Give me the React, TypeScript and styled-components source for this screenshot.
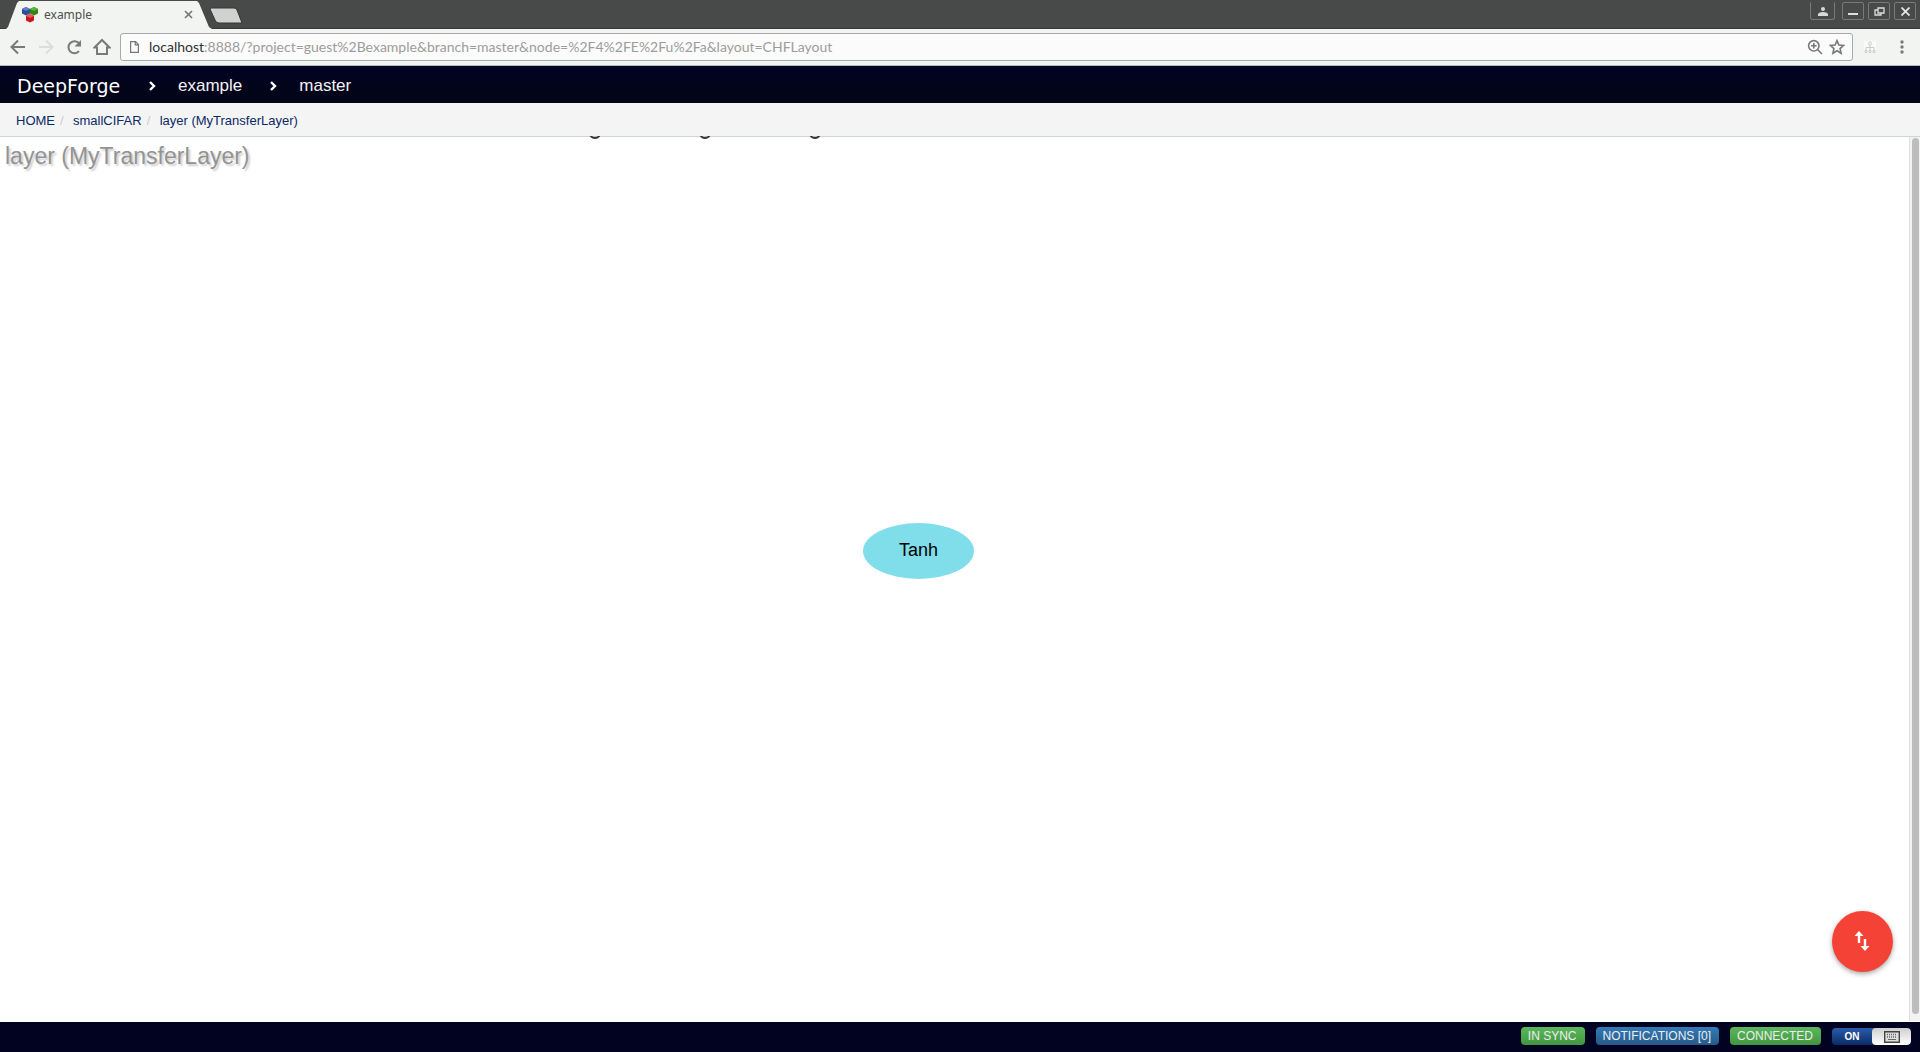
import React from 'react';
import styled, { createGlobalStyle } from 'styled-components';

const Global = createGlobalStyle`
  * { box-sizing: border-box; }
  html, body { margin: 0; padding: 0; overflow: hidden; }
  body { font-family: "Liberation Sans", Arial, sans-serif; background: #fff; }
  button, input { font: inherit; margin: 0; padding: 0; border: 0; background: none; }
  a { color: inherit; text-decoration: none; }
  svg { display: block; flex: none; }
`;

const uiFont = '"Noto Sans", "Open Sans", sans-serif';

const Page = styled.div`
  display: flex;
  flex-direction: column;
  height: 100vh;
`;

/* ---- browser chrome ---- */
const TabStrip = styled.div`
  display: flex;
  align-items: flex-start;
  height: 29px;
  background: #474a48;
  border-bottom: 1px solid #383a39;
`;
const Tab = styled.div`
  display: flex;
  align-items: center;
  width: 206px;
  height: 29px;
  margin-left: 6px;
  padding: 0 19px 0 16px;
  gap: 6px;
  background: #f2f4f2;
  clip-path: polygon(0 100%, 2px 93%, 11px 3px, 13px 1px, 191px 1px, 193px 3px, 203px 93%, 100% 100%);
`;
const TabTitle = styled.span`
  flex: 1;
  font: 12px/18px ${uiFont};
  color: #4c504e;
`;
const IconButton = styled.button`
  display: flex;
  align-items: center;
  justify-content: center;
  flex: none;
`;
const NewTab = styled(IconButton)`
  margin-top: 7px;
  margin-left: -3px;
`;
const WindowButtons = styled.div`
  display: flex;
  gap: 4px;
  margin: 2px 4px 0 auto;
`;
const WindowButton = styled(IconButton)<{ $user?: boolean }>`
  width: ${p => (p.$user ? 25 : 22)}px;
  height: 18px;
  margin-right: ${p => (p.$user ? 3 : 0)}px;
  border: 1px solid #777a78;
  border-top-color: ${p => (p.$user ? '#474a48' : '#777a78')};
  border-radius: ${p => (p.$user ? '0 0 3px 3px' : '2px')};
`;
const Toolbar = styled.div`
  display: flex;
  align-items: center;
  height: 37px;
  padding: 0 9px;
  background: #f2f4f2;
  border-bottom: 1px solid #b4b9b5;
`;
const NavButtons = styled.div`
  display: flex;
  gap: 10px;
  width: 111px;
`;
const AddressBar = styled.div`
  display: flex;
  align-items: center;
  flex: 1;
  height: 28px;
  padding: 0 7px 0 9px;
  border: 1px solid #a8aaa9;
  border-radius: 3px;
  background: #fbfbfb;
`;
const Address = styled.div`
  flex: 1;
  margin-left: 10px;
  font: 14px/20px Lato, ${uiFont};
  color: #9b9d9c;
  white-space: nowrap;
  b { font-weight: 400; color: #303231; }
`;
const AddressIcons = styled.div`
  display: flex;
  gap: 6px;
`;
const ToolbarEnd = styled.div`
  display: flex;
  align-items: center;
  gap: 17px;
  margin-left: 11px;
`;

/* ---- application ---- */
const AppHeader = styled.header`
  display: flex;
  align-items: center;
  height: 37px;
  padding: 2px 17px 0;
  background: linear-gradient(#020222, #020516);
  color: #f2f2f4;
  font-size: 17px;
  line-height: 20px;
`;
const Brand = styled.a`
  width: 104px;
  font: 19px/20px "DejaVu Sans", sans-serif;
  color: #fff;
`;
const Separator = styled.svg`
  margin: 0 22px 0 28px;
`;
const Crumbs = styled.nav`
  display: flex;
  align-items: center;
  height: 34px;
  padding: 2px 16px 0;
  background: #f4f4f4;
  border-bottom: 1px solid #cdd4e0;
  font-size: 13px;
  line-height: 18px;
  color: #0b2a66;
`;
const Slash = styled.span`
  width: 18px;
  padding-left: 5px;
  color: #ccc;
`;
const Workspace = styled.main`
  position: relative;
  flex: 1;
  min-height: 0;
  display: flex;
`;
const Canvas = styled.section`
  position: relative;
  flex: 1;
  padding: 5px;
`;
const Title = styled.h1`
  margin: 0;
  font-size: 23px;
  line-height: 28px;
  font-weight: 400;
  color: #939393;
  text-shadow: 2px 2px 2px #ccc;
`;
const EdgeMarks = styled.div`
  position: absolute;
  top: -1px;
  left: 590px;
  display: flex;
  gap: 100px;
`;
const Node = styled.button`
  position: absolute;
  left: 863px;
  top: 386px;
  width: 111px;
  height: 56px;
  padding-bottom: 2px;
  border-radius: 50%;
  background: #80deea;
  font-size: 18px;
  line-height: 22px;
  color: #000;
`;
const ActionButton = styled(IconButton)`
  position: absolute;
  right: 27px;
  bottom: 50px;
  width: 61px;
  height: 61px;
  padding: 0 2px 2px 0;
  border-radius: 50%;
  background: #f44336;
  box-shadow: 0 2px 5px rgba(0, 0, 0, 0.35);
`;
const ScrollTrack = styled.div`
  width: 11px;
  padding: 1px 1px 7px 2px;
  margin-bottom: 1px;
  background: #f3f3f3;
  border-left: 1px solid #dedede;
`;
const ScrollThumb = styled.div`
  width: 7px;
  height: 100%;
  border-radius: 4px;
  background: #bdbdbd;
`;
const Footer = styled.footer`
  display: flex;
  align-items: center;
  justify-content: flex-end;
  gap: 11px;
  height: 30px;
  padding: 0 9px 2px;
  background: #020320;
`;
const Status = styled.button<{ $blue?: boolean }>`
  height: 18px;
  padding: 0 8px 0 7px;
  border-radius: 4px;
  background: ${p => (p.$blue ? 'linear-gradient(#337ab7, #265a88)' : 'linear-gradient(#5cb85c, #419641)')};
  color: #eee;
  font-size: 12px;
  line-height: 18px;
`;
const Toggle = styled.button`
  display: flex;
  width: 79px;
  height: 17px;
  border-radius: 4px;
  overflow: hidden;
  background: linear-gradient(#2a5caa, #0a2c66);
  color: #fff;
  font: bold 10px/17px "Liberation Sans", sans-serif;
`;
const ToggleText = styled.span`
  flex: 1;
`;
const ToggleKnob = styled.span`
  display: flex;
  align-items: center;
  justify-content: center;
  width: 39px;
  height: 17px;
  padding-top: 2px;
  border-radius: 4px;
  background: linear-gradient(#cfcfcf, #fff);
`;

const Favicon = () => (
  <svg width="16" height="16" viewBox="0 0 16 16">
    <path d="M4 0l4 2v4.500l-4 2-4-2V2z" fill="#2e4f91" />
    <path d="M4 0l4 2-4 2-4-2z" fill="#5d82c5" />
    <path d="M12 0l4 2v4.500l-4 2-4-2V2z" fill="#318514" />
    <path d="M12 0l4 2-4 2-4-2z" fill="#5ab634" />
    <path d="M8 7l4 2v4.500l-4 2-4-2V9z" fill="#c31a18" />
    <path d="M8 7l4 2-4 2-4-2z" fill="#ee5550" />
  </svg>
);

const Arrow = ({ back }: { back?: boolean }) => (
  <svg width="18" height="18" viewBox="0 0 18 18" fill="none" stroke={back ? '#777a79' : '#dcdedd'} strokeWidth="2">
    {back ? <path d="M16 9H3M9 2.500L2.500 9 9 15.500" /> : <path d="M2 9h13M9 2.500L15.500 9 9 15.500" />}
  </svg>
);

const Chevron = () => (
  <Separator width="7" height="10" viewBox="0 0 7 10" fill="none" stroke="#fff" strokeWidth="2.400">
    <path d="M1 1l4 4-4 4" />
  </Separator>
);

const EdgeMark = () => (
  <svg width="10" height="3" viewBox="0 0 10 3" fill="none" stroke="#333" strokeWidth="1.700">
    <path d="M.5 0Q5 4 9.500 0" />
  </svg>
);

export default function App() {
  return (
    <Page>
      <Global />
      <TabStrip>
        <Tab>
          <Favicon />
          <TabTitle>example</TabTitle>
          <IconButton aria-label="Close tab">
            <svg width="9" height="9" viewBox="0 0 9 9" stroke="#777" strokeWidth="1.700"><path d="M1 1l7 7M8 1L1 8" /></svg>
          </IconButton>
        </Tab>
        <NewTab aria-label="New tab">
          <svg width="34" height="17" viewBox="0 0 34 17"><path d="M2 1h23q2 0 3 2l5 13H10q-3 0-4-3L1 2z" fill="#d0d2d0" stroke="#353736" /></svg>
        </NewTab>
        <WindowButtons>
          <WindowButton $user aria-label="Profile">
            <svg width="10" height="9" viewBox="0 0 10 9" fill="#d8dad8"><circle cx="5" cy="2" r="2" /><path d="M0 9V7q1-2 5-2t5 2v2z" /></svg>
          </WindowButton>
          <WindowButton aria-label="Minimize">
            <svg width="10" height="10" viewBox="0 0 10 10"><path d="M0 7h10v2H0z" fill="#dcdedc" /></svg>
          </WindowButton>
          <WindowButton aria-label="Restore">
            <svg width="11" height="9" viewBox="0 0 11 9" fill="none" stroke="#dcdedc" strokeWidth="1.300"><path d="M4 1h6v5H4zM4 3H1v5h6V6" /></svg>
          </WindowButton>
          <WindowButton aria-label="Close">
            <svg width="9" height="9" viewBox="0 0 9 9" stroke="#e4e6e4" strokeWidth="1.800"><path d="M.5.5l8 8M8.500.5l-8 8" /></svg>
          </WindowButton>
        </WindowButtons>
      </TabStrip>
      <Toolbar>
        <NavButtons>
          <IconButton aria-label="Back"><Arrow back /></IconButton>
          <IconButton aria-label="Forward"><Arrow /></IconButton>
          <IconButton aria-label="Reload">
            <svg width="18" height="18" viewBox="0 0 18 18"><path d="M14 13.200A6 6 0 1 1 13.500 4.800L15 6.500" fill="none" stroke="#777a79" strokeWidth="2" /><path d="M16 2v6.500H9.500z" fill="#777a79" /></svg>
          </IconButton>
          <IconButton aria-label="Home">
            <svg width="18" height="18" viewBox="0 0 18 18" fill="none" stroke="#777a79" strokeWidth="2"><path d="M1.500 9.500L9 2l7.500 7.500H14V16H4V9.500z" /></svg>
          </IconButton>
        </NavButtons>
        <AddressBar>
          <svg width="9" height="12" viewBox="0 0 9 12" fill="none" stroke="#777" strokeWidth="1.200"><path d="M.6.600h5L8.400 3.500v7.900H.6zM5.300.6v3.200h3.100" /></svg>
          <Address><b>localhost</b>:8888/?project=guest%2Bexample&amp;branch=master&amp;node=%2F4%2FE%2Fu%2Fa&amp;layout=CHFLayout</Address>
          <AddressIcons>
            <IconButton aria-label="Zoom">
              <svg width="16" height="16" viewBox="0 0 16 16" fill="none" stroke="#777a79" strokeWidth="1.600"><circle cx="6.800" cy="6.800" r="5.200" /><path d="M10.500 10.500l4.500 4.500M4 6.800h5.600M6.800 4v5.600" /></svg>
            </IconButton>
            <IconButton aria-label="Bookmark">
              <svg width="16" height="16" viewBox="0 0 16 16" fill="none" stroke="#777a79" strokeWidth="1.600"><path d="M8 1.600l1.900 4.400 4.700.4-3.500 3.200 1 4.700L8 11.800l-4.100 2.500 1-4.700L1.400 6.400l4.700-.4z" /></svg>
            </IconButton>
          </AddressIcons>
        </AddressBar>
        <ToolbarEnd>
          <IconButton aria-label="Extension">
            <svg width="12" height="12" viewBox="0 0 12 12" fill="none" stroke="#c9cac9"><rect width="12" height="12" fill="#fafafa" stroke="none" /><circle cx="6" cy="2.500" r="1.500" /><path d="M6 4v5M2 9V6.500h8V9M1 9.500h2v2H1zM5 9.500h2v2H5zM9 9.500h2v2H9z" /></svg>
          </IconButton>
          <IconButton aria-label="Menu">
            <svg width="18" height="14" viewBox="0 0 18 14" fill="#777a79"><circle cx="9" cy="2" r="1.700" /><circle cx="9" cy="7" r="1.700" /><circle cx="9" cy="12" r="1.700" /></svg>
          </IconButton>
        </ToolbarEnd>
      </Toolbar>
      <AppHeader>
        <Brand href="#">DeepForge</Brand>
        <Chevron />
        <a href="#project">example</a>
        <Chevron />
        <a href="#branch">master</a>
      </AppHeader>
      <Crumbs>
        <a href="#home">HOME</a><Slash>/</Slash>
        <a href="#cifar">smallCIFAR</a><Slash>/</Slash>
        <a href="#layer">layer (MyTransferLayer)</a>
      </Crumbs>
      <Workspace>
        <Canvas>
          <Title>layer (MyTransferLayer)</Title>
          <EdgeMarks aria-hidden="true"><EdgeMark /><EdgeMark /><EdgeMark /></EdgeMarks>
          <Node>Tanh</Node>
        </Canvas>
        <ScrollTrack><ScrollThumb /></ScrollTrack>
        <ActionButton aria-label="Swap layer">
          <svg width="16" height="20" viewBox="0 0 16 20" fill="#fff"><path d="M5 0l4.500 5H6.200v7H3.800V5H.5zM11 20l-4.500-5h3.300V8h2.400v7h3.300z" /></svg>
        </ActionButton>
      </Workspace>
      <Footer>
        <Status>IN SYNC</Status>
        <Status $blue>NOTIFICATIONS [0]</Status>
        <Status>CONNECTED</Status>
        <Toggle role="switch" aria-checked="true">
          <ToggleText>ON</ToggleText>
          <ToggleKnob>
            <svg width="16" height="12" viewBox="0 0 16 12"><path d="M.7.7h14.600v10.600H.7z" fill="#ddd" stroke="#444" strokeWidth="1.400" /><path d="M3 3.500h10M3 6h10" stroke="#666" strokeDasharray="1 1" strokeWidth="1.500" /><path d="M4 8.500h8" stroke="#666" /></svg>
          </ToggleKnob>
        </Toggle>
      </Footer>
    </Page>
  );
}
